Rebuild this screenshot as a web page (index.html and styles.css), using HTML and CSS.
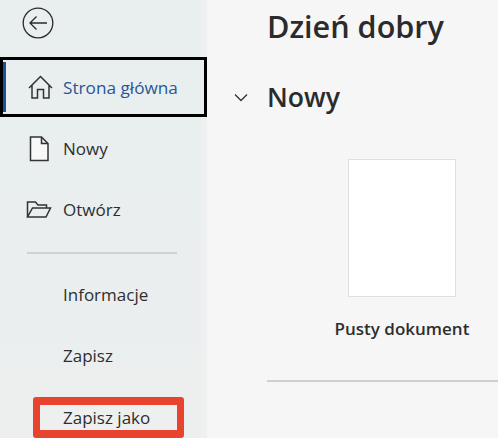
FILE: index.html
```html
<!DOCTYPE html>
<html lang="pl">
<head>
<meta charset="utf-8">
<title>Word</title>
<link rel="stylesheet" href="styles.css">
</head>
<body>
<div class="app">
  <nav class="side">
    <div class="back">
      <svg width="32" height="32" viewBox="0 0 32 32" fill="none" stroke="#2b2b2b" stroke-width="1.3"><circle cx="16" cy="16" r="14.8"/><path d="M8 16H25M14.5 9.5L8 16l6.500 6.500"/></svg>
    </div>
    <a class="item current">
      <svg class="ico" width="26" height="26" viewBox="0 0 26 26" fill="none" stroke="#333" stroke-width="1.5"><path d="M2 14L13.500 2.500 25 14M5 11.500V24H10.500V15.500H16.500V24H22V11.500"/></svg>
      <span>Strona główna</span>
    </a>
    <a class="item first">
      <svg class="ico" width="26" height="26" viewBox="0 0 26 26" fill="none" stroke="#333" stroke-width="1.500"><path d="M4.500 1H15.500L22 7.500V24.500H4.500ZM15.500 1V7.500H22" fill="#f8f8f8"/></svg>
      <span>Nowy</span>
    </a>
    <a class="item">
      <svg class="ico" width="26" height="26" viewBox="0 0 26 26" fill="none" stroke="#333" stroke-width="1.500"><path d="M1.500 20V5H9.500L12 8H20.500V11M1.500 20L6.500 11H24.500L20 20Z"/></svg>
      <span>Otwórz</span>
    </a>
    <hr class="rule">
    <a class="item plain">Informacje</a>
    <a class="item plain">Zapisz</a>
    <a class="item marked"><span>Zapisz jako</span></a>
  </nav>
  <main class="main">
    <h1>Dzień dobry</h1>
    <div class="section">
      <svg width="14" height="9" viewBox="0 0 14 9" fill="none" stroke="#333" stroke-width="1.300"><path d="M1 1.500L7 7.500l6-6"/></svg>
      <h2>Nowy</h2>
    </div>
    <div class="card">
      <div class="sheet"></div>
      <div class="label">Pusty dokument</div>
    </div>
    <hr class="divider">
  </main>
</div>
</body>
</html>
```
FILE: styles.css
```css
* { box-sizing: border-box; }
html, body { margin: 0; height: 100%; overflow: hidden; }
body { font-family: "Open Sans", "Noto Sans", sans-serif; color: #2e2e2e; background: #f6f6f6; }
.app { display: flex; width: 498px; height: 438px; overflow: hidden; }
.side { width: 207px; flex: none; background: linear-gradient(#e9eeee, #eaeeee 55%, #edefef); border-right: 6px solid #eff1f1; display: flex; flex-direction: column; height: 438px; }
.back { height: 57px; padding: 7px 0 0 22px; }
.back svg { display: block; }
.item { display: flex; align-items: center; height: 61px; font-size: 17px; padding-left: 63px; flex: none; white-space: nowrap; }
.first { margin-top: 1px; }
.item .ico { margin-left: -37px; margin-right: 11px; flex: none; }
.current { width: 207px; height: 60px; margin-right: -6px; border: 3px solid #000; color: #2a5699; position: relative; padding-left: 60px; background: #e9eeee; font-size: 17.2px; }
.current .ico { margin-left: -36px; margin-right: 10px; }
.current::before { content: ""; position: absolute; left: 0; top: 2px; bottom: 2px; width: 3px; background: #1f4f96; }
.rule { width: 150px; margin: 12px 0 0 27px; border: 0; border-top: 2px solid #ced2d2; flex: none; }
.rule + .plain { margin-top: 10px; }
.marked { margin: 11px 0 0 33px; width: 151px; height: 41px; border-style: solid; border-color: #e8432f; border-width: 8px 7px; border-radius: 3px; background: #eef0ef; padding-left: 23px; }
.main { flex: 1; padding: 0 0 0 60px; min-width: 0; }
h1 { margin: 0; font-size: 30.6px; font-weight: 600; line-height: 40px; padding-top: 6px; height: 62px; color: #2b2b2b; white-space: nowrap; }
.section { display: flex; align-items: center; height: 46px; margin-left: -33px; gap: 19px; margin-top: 12px; }
h2 { margin: 0; font-size: 26.6px; font-weight: 600; line-height: 36px; color: #2b2b2b; }
.card { width: 148px; margin-left: 61px; }
.sheet { width: 108px; height: 138px; background: #fff; border: 1px solid #dfdfdf; margin: 39px 0 0 20px; }
.label { font-size: 17px; font-weight: 600; line-height: 22px; margin-top: 21px; white-space: nowrap; text-align: center; }
.divider { border: 0; border-top: 2px solid #cfcfcf; margin: 40px 0 0 0; }
```
